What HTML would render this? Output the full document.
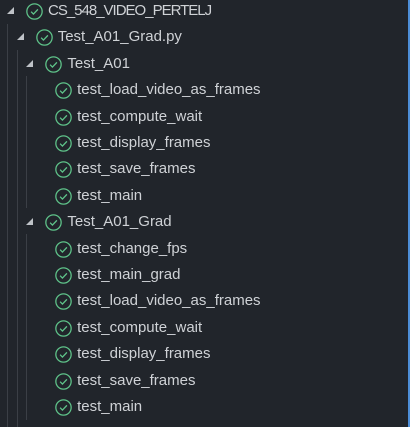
<!DOCTYPE html>
<html><head><style>
html,body{margin:0;padding:0}
body{width:410px;height:427px;background:#21252b;position:relative;overflow:hidden;font-family:"Liberation Sans",sans-serif;font-size:15px;color:#cfd2d6}
.r{position:absolute;height:26px;line-height:26px;white-space:nowrap}
.r svg{position:absolute;top:5px}
.r span{position:absolute;top:0}
.a{position:absolute;top:9px;width:0;height:0;border-left:7px solid transparent;border-bottom:7px solid #bfc3c8}
.g{position:absolute;width:1px;background:#3b3f46}
</style></head><body>
<div class="g" style="left:7px;top:24px;height:403px"></div>
<div class="g" style="left:17px;top:50px;height:377px"></div>
<div class="g" style="left:26px;top:76px;height:132px"></div>
<div class="g" style="left:26px;top:234px;height:186px"></div>
<div style="position:absolute;right:0;top:0;width:2px;height:427px;background:#4d8ed8"></div>
<div id="c"></div>
<script>
var rows=[[0,"CS_548_VIDEO_PERTELJ",1],[1,"Test_A01_Grad.py",1],[2,"Test_A01",1],[3,"test_load_video_as_frames"],[3,"test_compute_wait"],[3,"test_display_frames"],[3,"test_save_frames"],[3,"test_main"],[2,"Test_A01_Grad",1],[3,"test_change_fps"],[3,"test_main_grad"],[3,"test_load_video_as_frames"],[3,"test_compute_wait"],[3,"test_display_frames"],[3,"test_save_frames"],[3,"test_main"]];
var h="";
rows.forEach(function(r,i){
 var y=Math.round(-2+i*26.4), x=r[0]*9.7;
 h+='<div class="r" style="top:'+y+'px;left:0;width:400px">';
 if(r[2]) h+='<div class="a" style="left:'+(x+7)+'px"></div>';
 h+='<svg width="17" height="17" viewBox="0 0 16 16" style="left:'+(x+26)+'px"><circle cx="8" cy="8" r="7.2" fill="none" stroke="#5fc48a" stroke-width="1.2"/><path d="M4.8 8.2l2.2 2.2 4.2-4.4" fill="none" stroke="#5fc48a" stroke-width="1.2"/></svg>';
 h+='<span style="left:'+(x+48)+'px'+(i==0?';letter-spacing:-1px':'')+'">'+r[1]+'</span></div>';
});
document.getElementById("c").innerHTML=h;
</script>
</body></html>
